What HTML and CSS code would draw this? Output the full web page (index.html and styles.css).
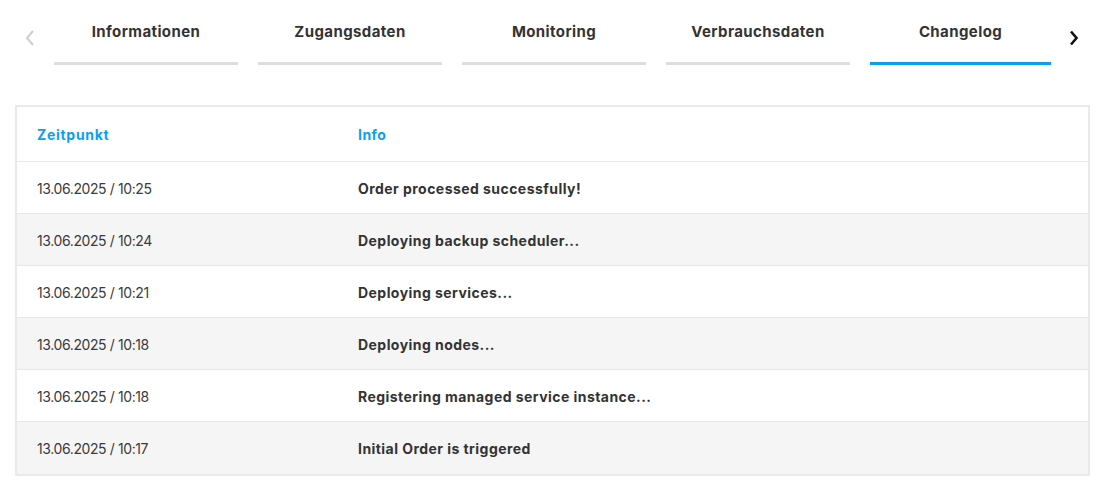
FILE: index.html
```html
<!DOCTYPE html>
<html lang="de">
<head>
<meta charset="utf-8">
<link rel="stylesheet" href="styles.css">
</head>
<body>
<nav class="tabbar">
  <span class="arrow arrow-left"><svg width="10" height="16" viewBox="0 0 10 16"><path d="M8 1 L2 8 L8 15" fill="none" stroke="#cfcfcf" stroke-width="2"/></svg></span>
  <div class="tabs">
    <div class="tab">Informationen</div>
    <div class="tab">Zugangsdaten</div>
    <div class="tab">Monitoring</div>
    <div class="tab">Verbrauchsdaten</div>
    <div class="tab active">Changelog</div>
  </div>
  <span class="arrow arrow-right"><svg width="10" height="16" viewBox="0 0 10 16"><path d="M2 1.5 L7.5 8 L2 14.5" fill="none" stroke="#111" stroke-width="2.6"/></svg></span>
</nav>
<section class="log">
  <div class="row head"><div class="c1">Zeitpunkt</div><div class="c2">Info</div></div>
  <div class="row"><div class="c1">13.06.2025 / 10:25</div><div class="c2">Order processed successfully!</div></div>
  <div class="row"><div class="c1">13.06.2025 / 10:24</div><div class="c2">Deploying backup scheduler...</div></div>
  <div class="row"><div class="c1">13.06.2025 / 10:21</div><div class="c2">Deploying services...</div></div>
  <div class="row"><div class="c1">13.06.2025 / 10:18</div><div class="c2">Deploying nodes...</div></div>
  <div class="row"><div class="c1">13.06.2025 / 10:18</div><div class="c2">Registering managed service instance...</div></div>
  <div class="row"><div class="c1">13.06.2025 / 10:17</div><div class="c2">Initial Order is triggered</div></div>
</section>
</body>
</html>
```
FILE: styles.css
```css
* { box-sizing: border-box; }
body {
  margin: 0;
  background: #fff;
  font-family: Inter, "Noto Sans", sans-serif;
  color: #333;
}
.tabbar {
  display: flex;
  align-items: flex-start;
  height: 105px;
  padding-left: 25px;
}
.arrow { display: flex; }
.arrow-left { margin-top: 30px; width: 29px; }
.arrow-right { margin-top: 30px; margin-left: 15px; }
.tabs {
  display: flex;
  gap: 20px;
}
.tab {
  width: 184px;
  height: 65px;
  padding-top: 22px;
  text-align: center;
  font-weight: 700;
  font-size: 15px;
  letter-spacing: 0.4px;
  color: #333;
  border-bottom: 3px solid #dedede;
}
.tab.active {
  width: 181px;
  border-bottom-color: #0a9ff0;
  margin-right: 3px;
}
.log {
  margin-left: 15px;
  width: 1075px;
  border: 2px solid #e9ebeb;
}
.row {
  display: flex;
  align-items: center;
  height: 52px;
  padding-top: 1px;
  border-bottom: 1px solid #e8e8e8;
  font-size: 14px;
}
.row:last-child { border-bottom: none; }
.row:nth-child(odd) { background: #f5f5f5; }
.row.head {
  background: #fff;
  height: 55px;
  color: #0a9ff0;
  font-weight: 700;
  letter-spacing: 0.7px;
}
.c1 { width: 321px; padding-left: 20px; }
.c2 { padding-left: 20px; font-weight: 700; letter-spacing: 0.45px; }
.row:not(.head) .c1 { color: #3a3a3a; letter-spacing: -0.4px; }
```
